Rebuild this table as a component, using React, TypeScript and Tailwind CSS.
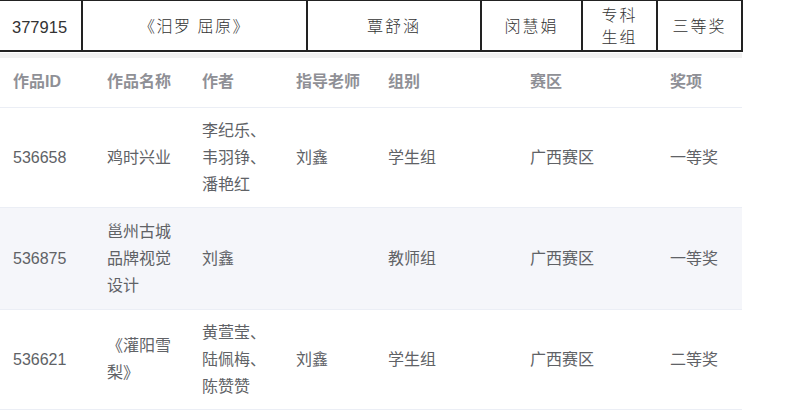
import React from 'react';

interface Row {
  id: string;
  name: string;
  authors: string;
  teacher: string;
  group: string;
  region: string;
  award: string;
}

const rows: Row[] = [
  { id: '536658', name: '鸡时兴业', authors: '李纪乐、韦羽铮、潘艳红', teacher: '刘鑫', group: '学生组', region: '广西赛区', award: '一等奖' },
  { id: '536875', name: '邕州古城品牌视觉设计', authors: '刘鑫', teacher: '', group: '教师组', region: '广西赛区', award: '一等奖' },
  { id: '536621', name: '《灌阳雪梨》', authors: '黄萱莹、陆佩梅、陈赞赞', teacher: '刘鑫', group: '学生组', region: '广西赛区', award: '二等奖' },
];

const headers = ['作品ID', '作品名称', '作者', '指导老师', '组别', '赛区', '奖项'];
const colWidths = ['w-[95px]', 'w-[95px]', 'w-[94px]', 'w-[92px]', 'w-[142px]', 'w-[140px]', 'w-[84px]'];
const rowHeights = ['h-[100px]', 'h-[102px]', 'h-[100px]'];

const App: React.FC = () => {
  return (
    <div className="w-[800px] h-[411px] bg-white overflow-hidden" style={{ fontFamily: "'Liberation Sans', 'Noto Sans CJK SC', sans-serif" }}>
      {/* scanned top row */}
      <table className="w-[742px] table-fixed border-collapse text-[#333] h-[52px]">
        <colgroup>
          <col className="w-[82px]" />
          <col className="w-[225px]" />
          <col className="w-[174px]" />
          <col className="w-[101px]" />
          <col className="w-[75px]" />
          <col className="w-[85px]" />
        </colgroup>
        <tbody>
          <tr className="border-t-[1.5px] border-b-2 border-[#222]">
            <td className="pl-[12px] text-[16.5px] pt-[3px]">377915</td>
            <td className="border-l-2 border-[#222] text-center text-[16px] tracking-[1.5px] font-light pt-[2px]">《汨罗 屈原》</td>
            <td className="border-l-2 border-[#222] text-center text-[16px] tracking-[2px] font-light pt-[2px]">覃舒涵</td>
            <td className="border-l-2 border-[#222] text-center text-[16px] tracking-[2px] font-light pt-[2px]">闵慧娟</td>
            <td className="border-l-2 border-[#222] text-center text-[16px] tracking-[2px] font-light leading-[22px] pt-[2px]">专科<br />生组</td>
            <td className="border-l-2 border-r-2 border-[#222] text-center text-[16px] tracking-[2px] font-light pt-[2px]">三等奖</td>
          </tr>
        </tbody>
      </table>
      <div className="w-[742px] h-[5px] mt-[1px] bg-[#f1f1f1]" />

      <table className="w-[742px] table-fixed border-collapse text-[16px]">
        <colgroup>
          {colWidths.map((w, i) => (
            <col key={i} className={w} />
          ))}
        </colgroup>
        <thead>
          <tr className="h-[49px] border-b border-[#ebeef5]">
            {headers.map((h, i) => (
              <th key={h} className={`text-left font-bold text-[#8f9096] ${i === 0 ? 'pl-[13px]' : 'pl-[12px]'}`}>
                {h}
              </th>
            ))}
          </tr>
        </thead>
        <tbody>
          {rows.map((r, idx) => (
            <tr key={r.id} className={`${rowHeights[idx]} border-b border-[#ebeef5] text-[#606266] leading-[27px] ${idx === 1 ? 'bg-[#f5f6fa]' : ''}`}>
              <td className="pl-[13px] pr-[12px] align-middle">{r.id}</td>
              <td className="pl-[12px] pr-[12px] align-middle">{r.name}</td>
              <td className="pl-[12px] pr-[12px] align-middle">{r.authors}</td>
              <td className="pl-[12px] pr-[12px] align-middle">{r.teacher}</td>
              <td className="pl-[12px] pr-[12px] align-middle">{r.group}</td>
              <td className="pl-[12px] pr-[12px] align-middle">{r.region}</td>
              <td className="pl-[12px] pr-[12px] align-middle">{r.award}</td>
            </tr>
          ))}
        </tbody>
      </table>
    </div>
  );
};

export default App;
